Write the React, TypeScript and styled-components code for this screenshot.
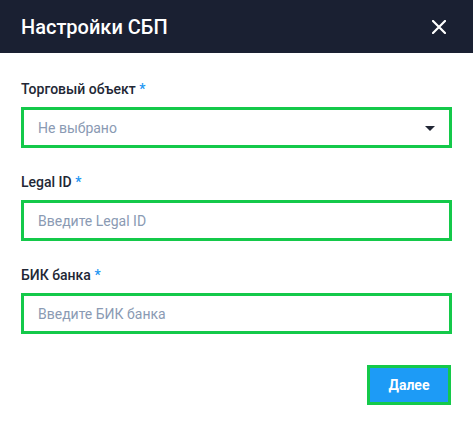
import React from "react";
import styled, { createGlobalStyle } from "styled-components";

const Global = createGlobalStyle`
  html, body { margin: 0; padding: 0; background: #ffffff; }
  body { font-family: Roboto, "Liberation Sans", Arial, sans-serif; }
  * { box-sizing: border-box; }
`;

const Dialog = styled.div`
  width: 473px;
  min-height: 426px;
  background: #ffffff;
  display: flex;
  flex-direction: column;
`;

const Header = styled.header`
  height: 53px;
  background: #1a2032;
  display: flex;
  align-items: center;
  justify-content: space-between;
  padding: 0 24px 0 21px;
`;

const Title = styled.h1`
  margin: 0;
  font-size: 20px;
  font-weight: 500;
  color: #ffffff;
  line-height: 24px;
`;

const CloseButton = styled.button`
  width: 20px;
  height: 20px;
  padding: 0;
  border: none;
  background: transparent;
  display: flex;
  align-items: center;
  justify-content: center;
  cursor: pointer;
  margin-top: 1px;
`;

const Body = styled.div`
  padding: 26px 21px 0 21px;
  display: flex;
  flex-direction: column;
  gap: 24px;
`;

const Field = styled.div`
  display: flex;
  flex-direction: column;
  gap: 8px;
`;

const Label = styled.label`
  font-size: 14px;
  line-height: 20px;
  font-weight: 500;
  color: #222735;
`;

const Required = styled.span`
  color: #2196f3;
`;

const Box = styled.div`
  height: 41px;
  border: 3px solid #14c94a;
  display: flex;
  align-items: center;
  justify-content: space-between;
  padding: 0 14px;
  background: #ffffff;
`;

const Placeholder = styled.span`
  font-size: 14px;
  color: #8a9ab3;
`;

const Caret = styled.span`
  width: 0;
  height: 0;
  border-left: 5px solid transparent;
  border-right: 5px solid transparent;
  border-top: 5px solid #222735;
  margin-top: 1px;
`;

const Footer = styled.div`
  display: flex;
  justify-content: flex-end;
  padding: 31px 22px 0 21px;
`;

const PrimaryButton = styled.button`
  width: 84px;
  height: 40px;
  border: 3px solid #14c94a;
  background: #1d9bf6;
  color: #ffffff;
  font-family: Roboto, "Liberation Sans", Arial, sans-serif;
  font-size: 14px;
  font-weight: 700;
  cursor: pointer;
  padding: 0;
`;

const fields = [
  { label: "Торговый объект", placeholder: "Не выбрано", select: true },
  { label: "Legal ID", placeholder: "Введите Legal ID", select: false },
  { label: "БИК банка", placeholder: "Введите БИК банка", select: false },
];

export default function App() {
  return (
    <>
      <Global />
      <Dialog>
        <Header>
          <Title>Настройки СБП</Title>
          <CloseButton aria-label="Закрыть">
            <svg width="14" height="14" viewBox="0 0 14 14">
              <path d="M1 1 L13 13 M13 1 L1 13" stroke="#ffffff" strokeWidth="2.2" strokeLinecap="round" />
            </svg>
          </CloseButton>
        </Header>
        <Body>
          {fields.map((f) => (
            <Field key={f.label}>
              <Label>
                {f.label} <Required>*</Required>
              </Label>
              <Box>
                <Placeholder>{f.placeholder}</Placeholder>
                {f.select && <Caret />}
              </Box>
            </Field>
          ))}
        </Body>
        <Footer>
          <PrimaryButton>Далее</PrimaryButton>
        </Footer>
      </Dialog>
    </>
  );
}
